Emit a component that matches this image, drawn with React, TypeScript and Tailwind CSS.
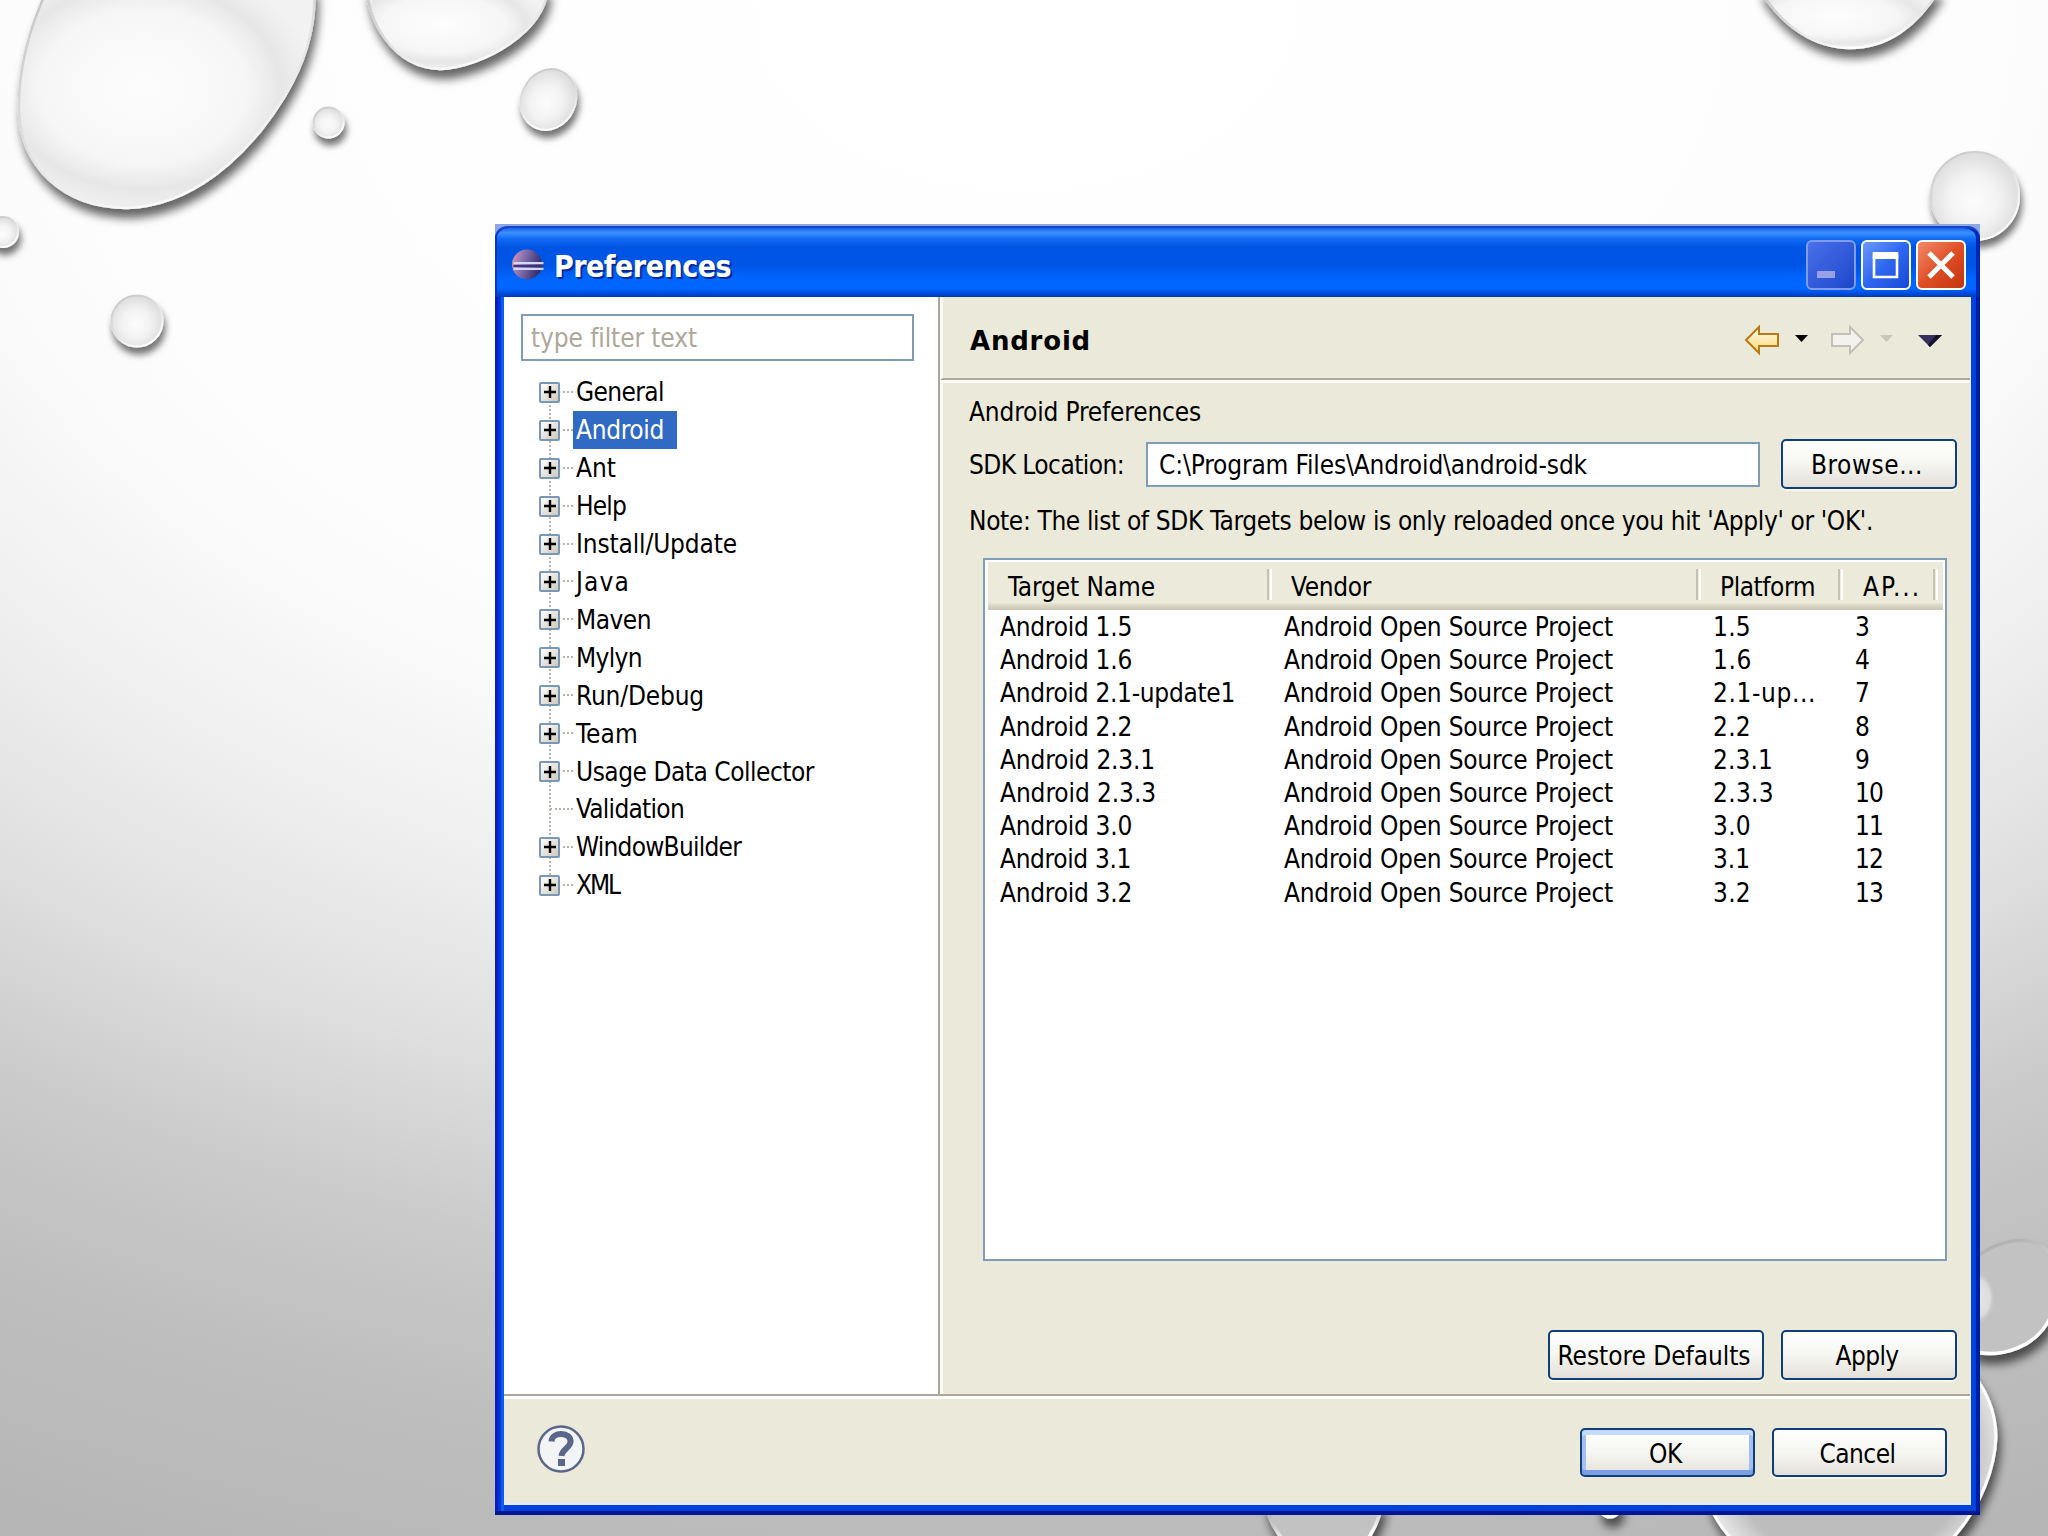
import { useLayoutEffect, useRef, useState } from "react";

const treeItems = [
  { label: "General", width: 88 },
  { label: "Android", width: 88 },
  { label: "Ant", width: 40 },
  { label: "Help", width: 50 },
  { label: "Install/Update", width: 161 },
  { label: "Java", width: 54 },
  { label: "Maven", width: 75 },
  { label: "Mylyn", width: 66 },
  { label: "Run/Debug", width: 128 },
  { label: "Team", width: 62 },
  { label: "Usage Data Collector", width: 238 },
  { label: "Validation", width: 108, leaf: true },
  { label: "WindowBuilder", width: 165 },
  { label: "XML", width: 43 },
];

const targets = [
  { name: "Android 1.5", nameWidth: 132, platform: "1.5", platformWidth: 38, api: "3" },
  { name: "Android 1.6", nameWidth: 132, platform: "1.6", platformWidth: 39, api: "4" },
  { name: "Android 2.1-update1", nameWidth: 235, platform: "2.1-up...", platformWidth: 103, api: "7" },
  { name: "Android 2.2", nameWidth: 132, platform: "2.2", platformWidth: 38, api: "8" },
  { name: "Android 2.3.1", nameWidth: 155, platform: "2.3.1", platformWidth: 60, api: "9" },
  { name: "Android 2.3.3", nameWidth: 156, platform: "2.3.3", platformWidth: 61, api: "10" },
  { name: "Android 3.0", nameWidth: 132, platform: "3.0", platformWidth: 38, api: "11" },
  { name: "Android 3.1", nameWidth: 131, platform: "3.1", platformWidth: 37, api: "12" },
  { name: "Android 3.2", nameWidth: 132, platform: "3.2", platformWidth: 38, api: "13" },
];

function Background() {
  return (
    <svg className="absolute inset-0" width="2048" height="1536" viewBox="0 0 2048 1536">
      <defs>
        <radialGradient id="drop" cx="0.42" cy="0.45" r="0.58">
          <stop offset="0" stopColor="#fdfdfd" />
          <stop offset="0.6" stopColor="#f6f6f6" />
          <stop offset="0.8" stopColor="#e7e7e7" />
          <stop offset="1" stopColor="#f2f2f2" />
        </radialGradient>
        <radialGradient id="bead" cx="0.48" cy="0.55" r="0.55">
          <stop offset="0" stopColor="#fcfcfc" />
          <stop offset="0.5" stopColor="#f3f3f3" />
          <stop offset="1" stopColor="#dcdcdc" />
        </radialGradient>
        <linearGradient id="rim" x1="0" y1="0" x2="0.6" y2="1">
          <stop offset="0" stopColor="#c4c4c4" />
          <stop offset="0.5" stopColor="#dcdcdc" />
          <stop offset="1" stopColor="#ffffff" />
        </linearGradient>
        <linearGradient id="greyRim" x1="0" y1="0" x2="0.3" y2="1">
          <stop offset="0" stopColor="#a6a6a6" />
          <stop offset="0.4" stopColor="#cfcfcf" />
          <stop offset="0.7" stopColor="#ffffff" />
        </linearGradient>
        <radialGradient id="pool" cx="0.5" cy="0.5" r="0.52">
          <stop offset="0.8" stopColor="#bdbdbd" />
          <stop offset="1" stopColor="#e6e6e6" />
        </radialGradient>
        <radialGradient id="glint">
          <stop offset="0" stopColor="#e4e6e4" />
          <stop offset="0.7" stopColor="#dcdedc" />
          <stop offset="1" stopColor="#c6c6c6" stopOpacity="0" />
        </radialGradient>
        <filter id="shadow" x="-30%" y="-30%" width="160%" height="170%">
          <feDropShadow dx="3" dy="9" stdDeviation="5" floodColor="#000" floodOpacity="0.6" />
        </filter>
        <filter id="beadShadow" x="-40%" y="-40%" width="180%" height="200%">
          <feDropShadow dx="2" dy="7" stdDeviation="3.5" floodColor="#000" floodOpacity="0.55" />
        </filter>
      </defs>
      <g fill="url(#drop)" stroke="url(#rim)" strokeWidth="2.5" filter="url(#shadow)">
        <path d="M48 -12C28 30 18 72 19 112C20 165 62 208 127 208C190 206 246 160 285 96C308 58 316 20 314 -12Z" />
        <path d="M367 -12C367 18 392 68 440 69C482 68 548 30 547 -12Z" />
        <path d="M1760 -10C1783 28 1816 48 1850 48C1888 48 1918 25 1939 -10Z" />
      </g>
      <g fill="url(#bead)" stroke="url(#rim)" strokeWidth="2" filter="url(#beadShadow)">
        <ellipse cx="548.500" cy="99.500" rx="27" ry="31" transform="rotate(25 548.500 99.500)" />
        <circle cx="328.500" cy="122.500" r="15" />
        <circle cx="3" cy="232" r="15" />
        <circle cx="137" cy="321" r="25.500" />
        <circle cx="1975" cy="196" r="44" />
      </g>
      <g fill="#c2c2c2" stroke="url(#greyRim)" strokeWidth="3.500" filter="url(#shadow)">
        <path d="M1970 1265C1985 1245 2015 1237 2032 1242C2062 1250 2066 1290 2048 1322C2035 1345 2005 1358 1975 1352Z" />
        <path d="M1266 1505C1274 1540 1300 1560 1325 1560C1355 1560 1374 1540 1382 1505Z" />
      </g>
      <ellipse cx="1978" cy="1298" rx="17" ry="26" fill="url(#glint)" />
      <g stroke="#fff" strokeWidth="3" filter="url(#shadow)">
        <path fill="url(#pool)" d="M1850 1320C1960 1330 1996 1390 1996 1437C1994 1500 1940 1580 1860 1585C1780 1585 1730 1550 1712 1510C1680 1400 1760 1320 1850 1320Z" />
        <circle cx="1610" cy="1507" r="10" fill="#eee" />
      </g>
    </svg>
  );
}

/* One line of text, tracked so that it fills the given width */
function Label({ children, width }: { children: string; width: number }) {
  const ref = useRef<HTMLSpanElement>(null);
  const [spacing, setSpacing] = useState(0);

  useLayoutEffect(() => {
    if (!ref.current) return;
    ref.current.style.letterSpacing = "0px";
    const natural = ref.current.getBoundingClientRect().width;
    const next = (width - natural) / children.length;
    ref.current.style.letterSpacing = `${next}px`;
    setSpacing(next);
  }, [children, width]);

  return (
    <span ref={ref} className="block w-max shrink-0 leading-[30px] whitespace-nowrap" style={{ letterSpacing: spacing }}>
      {children}
    </span>
  );
}

function Expander() {
  return (
    <span className="relative flex h-[21px] w-[21px] items-center justify-center rounded-[2px] border-2 border-[#7898b5] bg-gradient-to-br from-white to-[#cfc9bc]">
      <svg width="12" height="12" viewBox="0 0 12 12" stroke="#000" strokeWidth="2.4">
        <path d="M0 6h12M6 0v12" />
      </svg>
    </span>
  );
}

function XpButton({ label, width, className, primary }: { label: string; width: number; className: string; primary?: boolean }) {
  return (
    <button
      className={`flex items-center justify-center rounded-[5px] border-2 border-[#0f3f78] bg-gradient-to-b from-white via-[#f5f5f1] to-[#e3e0d8] pt-[2px] pr-1 ${className} ${
        primary ? "shadow-[inset_0_5px_0_#c3dafb,inset_0_-5px_0_#7d9fe6,inset_4px_0_0_#a3c0f4,inset_-4px_0_0_#a3c0f4]" : "shadow-[0_2px_1px_#f8f7f0]"
      }`}
    >
      <Label width={width}>{label}</Label>
    </button>
  );
}

function TitleBar() {
  return (
    <div className="flex h-[71px] items-center rounded-t-[12px] border-t-2 border-[#1447c8] bg-[linear-gradient(180deg,#1c60e8_0%,#3b92ff_7%,#1069f5_16%,#0054e3_28%,#0055e6_55%,#0066ff_75%,#0066ff_88%,#0050e0_94%,#0038b8_100%)] pt-[4px] pr-[14px] pl-[15px] shadow-[inset_2px_0_0_#0a35c8,inset_-4px_0_0_#0026b8]">
      <svg width="34" height="31" viewBox="0 0 34 32">
        <defs>
          <linearGradient id="ecl" x1="0" y1="0.3" x2="1" y2="0.6">
            <stop offset="0" stopColor="#d98fa9" />
            <stop offset="0.3" stopColor="#8d77b4" />
            <stop offset="1" stopColor="#2c2568" />
          </linearGradient>
        </defs>
        <circle cx="17" cy="16" r="15.5" fill="url(#ecl)" />
        <path d="M3 14.500h31M3 20.500h31" stroke="#d4d8f6" strokeWidth="2.4" />
        <path d="M3 17.500h31" stroke="#3a3478" strokeWidth="2" />
      </svg>
      <h1 className="mt-[5px] ml-[10px] flex-1 text-[30px] font-bold text-white [text-shadow:2px_2px_0_#0a2a9a]">
        <Label width={177}>Preferences</Label>
      </h1>
      <div className="flex gap-[5px]">
        <span className="h-[50px] w-[50px] rounded-[6px] border-2 border-[#7f9cf0] bg-gradient-to-br from-[#4a70ea] to-[#1c46cc]">
          <svg width="46" height="46">
            <path d="M9 29h18v7H9z" fill="#98a0e8" />
          </svg>
        </span>
        <span className="h-[50px] w-[50px] rounded-[6px] border-2 border-white bg-gradient-to-br from-[#6c98fb] via-[#2f66ef] to-[#1748d8]">
          <svg width="46" height="46">
            <path d="M11 14v21h23V14z" fill="none" stroke="#fff" strokeWidth="2.6" />
            <path d="M9.700 10h25.600v7H9.700z" fill="#fff" />
          </svg>
        </span>
        <span className="h-[50px] w-[50px] rounded-[6px] border-2 border-white bg-gradient-to-br from-[#f08a68] via-[#e04e25] to-[#c2350c]">
          <svg width="46" height="46">
            <path d="M11 11L35 35M35 11L11 35" stroke="#fff" strokeWidth="5" />
          </svg>
        </span>
      </div>
    </div>
  );
}

function Tree() {
  return (
    <aside className="w-[434px] shrink-0 bg-white pt-[17px] pl-[17px]">
      <div className="flex h-[47px] w-[393px] items-center border-2 border-[#7f9db9] pl-[8px] text-[#aca899]">
        <Label width={166}>type filter text</Label>
      </div>
      <ul className="relative mt-[12px] pl-[18px]">
        <li className="absolute top-[20px] left-[28px] h-[490px] border-l-2 border-dotted border-[#b8b4aa]" />
        {treeItems.map((item) => (
          <li key={item.label} className="flex h-[37.92px] items-center">
            <span className="w-[21px] pt-px">{!item.leaf && <Expander />}</span>
            <span className={item.leaf ? "-ml-[10px] w-[23px] border-t-2 border-dotted border-[#b8b4aa]" : "ml-[3px] w-[10px] border-t-2 border-dotted border-[#b8b4aa]"} />
            <span className={`flex h-full items-center pt-px pr-[13px] pl-[3px] ${item.label === "Android" ? "bg-[#316ac5] text-white" : ""}`}>
              <Label width={item.width}>{item.label}</Label>
            </span>
          </li>
        ))}
      </ul>
    </aside>
  );
}

function NavArrows() {
  return (
    <svg width="200" height="32" viewBox="0 0 200 32">
      <defs>
        <linearGradient id="gold" x1="0" y1="0" x2="0" y2="1">
          <stop offset="0" stopColor="#fffdf0" />
          <stop offset="1" stopColor="#fbd873" />
        </linearGradient>
      </defs>
      <path d="M2 16L15 3V10H34V22H15V29Z" fill="url(#gold)" stroke="#b97a12" strokeWidth="2" />
      <path d="M51 11h13l-6.500 7z" fill="#000" />
      <path d="M119 16L106 3V10H88V22H106V29Z" fill="#f3f2ec" stroke="#c3c1b7" strokeWidth="2" />
      <path d="M136 11h13l-6.500 7z" fill="#c9c7bb" />
      <path d="M174 11h24l-12 12z" fill="#37305f" />
      <path d="M198 11l-12 12l-2-2l8-10z" fill="#15122b" />
    </svg>
  );
}

function HeaderCell({ label, width, className }: { label: string; width: number; className: string }) {
  return (
    <div className={`flex h-full items-center ${className}`}>
      <div className="flex-1 pt-[2px]">
        <Label width={width}>{label}</Label>
      </div>
      <span className="-mt-[3px] h-[31px] w-[5px] border-r-2 border-l-2 border-r-white border-l-[#c5c2b4]" />
    </div>
  );
}

function TargetTable() {
  return (
    <div className="mt-[22px] ml-[13px] h-[703px] w-[964px] border-2 border-[#7f9db9] bg-white p-[2px] pl-[3px]">
      <div className="flex h-[48px] bg-[linear-gradient(180deg,#ebeadb_0%,#ebeadb_84%,#dbd8c8_90%,#c8c5b4_100%)]">
        <HeaderCell label="Target Name" width={147} className="w-[284px] pl-[20px]" />
        <HeaderCell label="Vendor" width={80} className="w-[429px] pl-[19px]" />
        <HeaderCell label="Platform" width={95} className="w-[142px] pl-[19px]" />
        <HeaderCell label="AP..." width={58} className="w-[95px] pl-[20px]" />
      </div>
      {targets.map((target) => (
        <div key={target.name} className="flex h-[33.200px] items-center pt-px pl-[12px]">
          <div className="w-[284px]"><Label width={target.nameWidth}>{target.name}</Label></div>
          <div className="w-[429px]"><Label width={329}>Android Open Source Project</Label></div>
          <div className="w-[142px]"><Label width={target.platformWidth}>{target.platform}</Label></div>
          <Label width={target.api.length * 14}>{target.api}</Label>
        </div>
      ))}
    </div>
  );
}

export default function App() {
  return (
    <main className="relative h-[1536px] w-[2048px] overflow-hidden bg-[radial-gradient(2448px_1700px_at_50%_0,#ffffff_0%,#fdfdfd_40%,#fafafa_45%,#efefef_55%,#e0e0e0_65%,#cacaca_76%,#bfbfbf_85%,#b6b6b6_98%)] font-['DejaVu_Sans_Condensed','DejaVu_Sans',sans-serif] text-[26px] leading-none text-black [font-stretch:condensed]">
      <Background />
      <section className="absolute top-[224px] left-[495px] flex h-[1291px] w-[1485px] flex-col bg-[#8ea6e6] pt-[2px]">
        <TitleBar />
        <div className="flex flex-1 flex-col bg-[#0541dc] px-[9px] pb-[10px] shadow-[inset_0_-4px_0_#001590,inset_3px_0_0_#0a1ec0,inset_-4px_0_0_#001da8,inset_6px_0_0_#0036d8,inset_9px_0_0_#0a5cf0]">
          <div className="flex flex-1 flex-col border-r border-b-2 border-[#e4ecf8] bg-[#ebe9da]">
            <div className="flex h-[1097px]">
              <Tree />
              <div className="flex flex-1 flex-col border-l-2 border-[#aca899]">
                <div className="flex h-[83px] items-center justify-between border-b-2 border-l-[3px] border-b-[#aca899] border-l-[#faf9f2] pt-[5px] pr-[26px] pl-[27px]">
                  <h2 className="pt-[2px] font-['DejaVu_Sans',sans-serif] font-bold [font-stretch:normal]"><Label width={121}>Android</Label></h2>
                  <NavArrows />
                </div>
                <div className="flex-1 border-t-[3px] border-l-[3px] border-[#faf9f2] pt-[14px] pl-[26px]">
                  <Label width={232}>Android Preferences</Label>
                  <div className="mt-[12px] flex h-[50px] items-center">
                    <div className="w-[177px] pt-[2px]"><Label width={155}>SDK Location:</Label></div>
                    <div className="flex h-[45px] w-[614px] items-center border-2 border-[#7f9db9] bg-white pt-[2px] pl-[11px]">
                      <Label width={428}>C:\Program Files\Android\android-sdk</Label>
                    </div>
                    <XpButton label="Browse..." width={112} className="ml-[21px] h-[50px] w-[176px]" />
                  </div>
                  <div className="mt-[17px]">
                    <Label width={904}>Note: The list of SDK Targets below is only reloaded once you hit 'Apply' or 'OK'.</Label>
                  </div>
                  <div className="pl-px">
                    <TargetTable />
                  </div>
                  <div className="mt-[69px] mr-[13px] flex justify-end gap-[17px]">
                    <XpButton label="Restore Defaults" width={193} className="h-[50px] w-[216px]" />
                    <XpButton label="Apply" width={63} className="h-[50px] w-[176px]" />
                  </div>
                </div>
              </div>
            </div>
            <footer className="flex flex-1 justify-between border-t-2 border-[#aca899] pr-[23px] pl-[33px] shadow-[inset_0_3px_0_#fff]">
              <svg className="mt-[29px]" width="48" height="48" viewBox="0 0 48 48">
                <circle cx="24" cy="24" r="22.500" fill="#f3f4f6" stroke="#5b678a" strokeWidth="2.500" />
                <path d="M14.500 16.500C15 6 34.500 7 33.500 17C33 23 25 24 24.500 31" fill="none" stroke="#5b678a" strokeWidth="6" />
                <path d="M21 34h7v7h-7z" fill="#5b678a" />
              </svg>
              <div className="mt-[32px] flex gap-[17px]">
                <XpButton label="OK" width={33} className="h-[49px] w-[175px]" primary />
                <XpButton label="Cancel" width={76} className="h-[49px] w-[175px]" />
              </div>
            </footer>
          </div>
        </div>
      </section>
    </main>
  );
}
